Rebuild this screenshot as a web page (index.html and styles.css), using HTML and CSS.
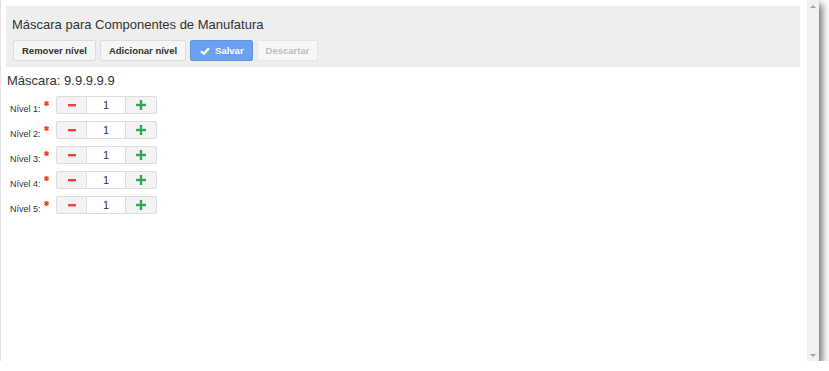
FILE: index.html
```html
<!DOCTYPE html>
<html lang="pt">
<head>
  <meta charset="UTF-8">
  <title>Máscara para Componentes de Manufatura</title>
  <link rel="stylesheet" href="styles.css">
</head>
<body>

  <div class="window">
    <div class="content">

      <div class="panel">
        <h1 class="panel-title">Máscara para Componentes de Manufatura</h1>
        <div class="toolbar">
          <button class="btn">Remover nível</button>
          <button class="btn">Adicionar nível</button>
          <button class="btn btn-primary">
            <svg class="check" viewBox="0 0 10 8" width="10" height="8"><path d="M1 4.2 L3.8 6.8 L9 1.2" fill="none" stroke="#fff" stroke-width="2.2"/></svg>
            Salvar
          </button>
          <button class="btn btn-disabled" disabled>Descartar</button>
        </div>
      </div>

      <div class="mask">Máscara: 9.9.9.9.9</div>

      <div class="levels">
        <div class="level">
          <label class="level-label">Nível 1:<svg class="req" viewBox="0 0 6 6" width="6" height="6"><path d="M3 0 L3 6 M0.4 1.5 L5.6 4.5 M0.4 4.5 L5.6 1.5" stroke="#e8461e" stroke-width="2"/></svg></label>
          <div class="spin">
            <button class="spin-btn"><svg viewBox="0 0 10 10" width="10" height="10"><rect x="1" y="4" width="8" height="2.4" fill="#e5453a"/></svg></button>
            <input class="spin-input" type="text" value="1">
            <button class="spin-btn"><svg viewBox="0 0 10 10" width="10" height="10"><rect x="0" y="3.8" width="10" height="2.4" fill="#2fa84f"/><rect x="3.8" y="0" width="2.4" height="10" fill="#2fa84f"/></svg></button>
          </div>
        </div>
        <div class="level">
          <label class="level-label">Nível 2:<svg class="req" viewBox="0 0 6 6" width="6" height="6"><path d="M3 0 L3 6 M0.4 1.5 L5.6 4.5 M0.4 4.5 L5.6 1.5" stroke="#e8461e" stroke-width="2"/></svg></label>
          <div class="spin">
            <button class="spin-btn"><svg viewBox="0 0 10 10" width="10" height="10"><rect x="1" y="4" width="8" height="2.4" fill="#e5453a"/></svg></button>
            <input class="spin-input" type="text" value="1">
            <button class="spin-btn"><svg viewBox="0 0 10 10" width="10" height="10"><rect x="0" y="3.8" width="10" height="2.4" fill="#2fa84f"/><rect x="3.8" y="0" width="2.4" height="10" fill="#2fa84f"/></svg></button>
          </div>
        </div>
        <div class="level">
          <label class="level-label">Nível 3:<svg class="req" viewBox="0 0 6 6" width="6" height="6"><path d="M3 0 L3 6 M0.4 1.5 L5.6 4.5 M0.4 4.5 L5.6 1.5" stroke="#e8461e" stroke-width="2"/></svg></label>
          <div class="spin">
            <button class="spin-btn"><svg viewBox="0 0 10 10" width="10" height="10"><rect x="1" y="4" width="8" height="2.4" fill="#e5453a"/></svg></button>
            <input class="spin-input" type="text" value="1">
            <button class="spin-btn"><svg viewBox="0 0 10 10" width="10" height="10"><rect x="0" y="3.8" width="10" height="2.4" fill="#2fa84f"/><rect x="3.8" y="0" width="2.4" height="10" fill="#2fa84f"/></svg></button>
          </div>
        </div>
        <div class="level">
          <label class="level-label">Nível 4:<svg class="req" viewBox="0 0 6 6" width="6" height="6"><path d="M3 0 L3 6 M0.4 1.5 L5.6 4.5 M0.4 4.5 L5.6 1.5" stroke="#e8461e" stroke-width="2"/></svg></label>
          <div class="spin">
            <button class="spin-btn"><svg viewBox="0 0 10 10" width="10" height="10"><rect x="1" y="4" width="8" height="2.4" fill="#e5453a"/></svg></button>
            <input class="spin-input" type="text" value="1">
            <button class="spin-btn"><svg viewBox="0 0 10 10" width="10" height="10"><rect x="0" y="3.8" width="10" height="2.4" fill="#2fa84f"/><rect x="3.8" y="0" width="2.4" height="10" fill="#2fa84f"/></svg></button>
          </div>
        </div>
        <div class="level">
          <label class="level-label">Nível 5:<svg class="req" viewBox="0 0 6 6" width="6" height="6"><path d="M3 0 L3 6 M0.4 1.5 L5.6 4.5 M0.4 4.5 L5.6 1.5" stroke="#e8461e" stroke-width="2"/></svg></label>
          <div class="spin">
            <button class="spin-btn"><svg viewBox="0 0 10 10" width="10" height="10"><rect x="1" y="4" width="8" height="2.4" fill="#e5453a"/></svg></button>
            <input class="spin-input" type="text" value="1">
            <button class="spin-btn"><svg viewBox="0 0 10 10" width="10" height="10"><rect x="0" y="3.8" width="10" height="2.4" fill="#2fa84f"/><rect x="3.8" y="0" width="2.4" height="10" fill="#2fa84f"/></svg></button>
          </div>
        </div>
      </div>

    </div>

    <!-- barra de rolagem -->
    <div class="scrollbar">
      <span class="arrow arrow-up"></span>
      <span class="arrow arrow-down"></span>
    </div>
  </div>

</body>
</html>
```

FILE: styles.css
```css
html, body {
  margin: 0;
  padding: 0;
  background: #fff;
  font-family: 'Liberation Sans', Arial, sans-serif;
  color: #333;
}

.window {
  width: 819px;
  height: 361px;
  box-sizing: border-box;
  border-left: 1px solid #e2e2e2;
  background: #fff;
  display: flex;
  box-shadow: 3px 4px 8px rgba(0, 0, 0, 0.6);
}

.content {
  flex: 1;
  padding: 6px 7px 6px 5px;
}

.panel {
  background: #eeeeee;
  padding: 11px 6px 6px 6px;
}

.panel-title {
  margin: 0 0 7px;
  font-size: 13px;
  font-weight: normal;
  line-height: 16px;
  color: #333;
}

.toolbar {
  display: flex;
  gap: 4px;
  padding-left: 1px;
}

.btn {
  height: 21px;
  box-sizing: border-box;
  padding: 0 8px;
  font-family: inherit;
  font-size: 9.5px;
  font-weight: bold;
  color: #333;
  background: #f6f6f6;
  border: 1px solid #dcdcdc;
  border-radius: 2px;
  display: flex;
  align-items: center;
  cursor: pointer;
}

.btn-primary {
  background: #6b9ff0;
  border-color: #5f93e6;
  color: #fff;
  padding: 0 8px 0 9px;
}

.check {
  margin-right: 5px;
}

.btn-disabled {
  background: #f7f7f7;
  border-color: #e6e6e6;
  color: #bdbdbd;
  cursor: default;
}

.mask {
  margin: 6px 0 0 1px;
  font-size: 13px;
  line-height: 16px;
  color: #333;
}

.levels {
  margin-top: 7px;
  display: flex;
  flex-direction: column;
  gap: 7px;
}

.level {
  display: flex;
  align-items: flex-end;
}

.level-label {
  width: 50px;
  padding-left: 4px;
  box-sizing: border-box;
  font-size: 9px;
  line-height: 10px;
  color: #333;
}

.req {
  margin-left: 3px;
  vertical-align: 6px;
  width: 5px;
  height: 5px;
}

.spin {
  display: flex;
  height: 18px;
}

.spin-btn {
  width: 31px;
  height: 18px;
  padding: 0;
  background: #f3f3f3;
  border: 1px solid #dcdcdc;
  display: flex;
  align-items: center;
  justify-content: center;
  cursor: pointer;
}

.spin-btn:first-child {
  border-radius: 2px 0 0 2px;
}

.spin-btn:last-child {
  width: 32px;
  border-radius: 0 2px 2px 0;
}

.spin-input {
  width: 38px;
  height: 18px;
  box-sizing: border-box;
  margin: 0;
  padding: 0;
  border: 1px solid #dcdcdc;
  border-left: none;
  border-right: none;
  text-align: center;
  font-family: inherit;
  font-size: 11px;
  color: #333;
  outline: none;
}

.scrollbar {
  width: 12px;
  background: #f1f1f1;
  display: flex;
  flex-direction: column;
  justify-content: space-between;
  align-items: center;
  padding: 5px 0 4px;
  box-sizing: border-box;
}

.arrow {
  width: 0;
  height: 0;
  border-left: 3px solid transparent;
  border-right: 3px solid transparent;
}

.arrow-up {
  border-bottom: 3px solid #a3a3a3;
}

.arrow-down {
  border-top: 3px solid #a3a3a3;
}
```
